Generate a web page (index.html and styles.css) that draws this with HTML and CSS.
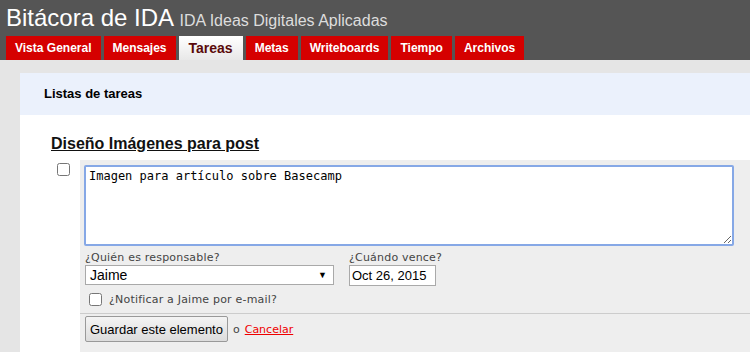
FILE: index.html
```html
<!DOCTYPE html>
<html lang="es">
<head>
<meta charset="UTF-8">
<title>Bitácora de IDA</title>
<link rel="stylesheet" href="styles.css">
</head>
<body>
<div id="header">
	<h1 class="title">Bitácora de IDA <span class="subtitle">IDA Ideas Digitales Aplicadas</span></h1>
	<ul class="tabs">
		<li><a href="#">Vista General</a></li>
		<li><a href="#">Mensajes</a></li>
		<li class="current"><a href="#">Tareas</a></li>
		<li><a href="#">Metas</a></li>
		<li><a href="#">Writeboards</a></li>
		<li><a href="#">Tiempo</a></li>
		<li><a href="#">Archivos</a></li>
	</ul>
</div>
<div id="content">
	<div class="panel-head">Listas de tareas</div>
	<h2 class="list-title">Diseño Imágenes para post</h2>
	<div class="item">
		<div class="check-col"><input type="checkbox"></div>
		<form class="item-form">
			<textarea class="item-text">Imagen para artículo sobre Basecamp</textarea>
			<div class="fields">
				<div class="field">
					<label>¿Quién es responsable?</label>
					<div class="select"><span>Jaime</span><span class="arrow">&#9660;</span></div>
				</div>
				<div class="field">
					<label>¿Cuándo vence?</label>
					<input class="date" type="text" value="Oct 26, 2015">
				</div>
			</div>
			<div class="notify"><input type="checkbox"> <span>¿Notificar a Jaime por e-mail?</span></div>
			<div class="actions">
				<button type="button" class="save">Guardar este elemento</button>
				<span class="or">o</span>
				<a href="#" class="cancel">Cancelar</a>
			</div>
		</form>
	</div>
</div>
</body>
</html>
```

FILE: styles.css
```css
body{
	margin: 0;
	background-color: #e5e5e5;
	font-family: "Liberation Sans", Arial, sans-serif;
	overflow: hidden;
}
#header{
	background-color: #555;
	padding: 4px 0 0 6px;
	height: 56px;
}
.title{
	margin: 0;
	height: 32px;
	font-size: 24px;
	font-weight: normal;
	color: #fff;
	line-height: 28px;
}
.subtitle{
	font-size: 16px;
	color: #ddd;
}
.tabs{
	list-style: none;
	margin: 0;
	padding: 0;
	display: flex;
	gap: 3px;
}
.tabs li a{
	display: block;
	height: 24px;
	line-height: 24px;
	padding: 0 9px;
	background-color: #d50000;
	color: #fff;
	font-size: 12px;
	font-weight: bold;
	text-decoration: none;
}
.tabs li.current a{
	background: linear-gradient(#fff, #e8e8e8);
	color: #5a0a0a;
	font-size: 14px;
	padding: 0 10px;
}
#content{
	margin: 13px 0 0 20px;
	background-color: #fff;
	height: 300px;
}
.panel-head{
	background-color: #ebf1fc;
	height: 42px;
	line-height: 42px;
	padding-left: 24px;
	font-size: 13px;
	font-weight: bold;
	color: #000;
}
.list-title{
	margin: 0;
	padding: 19px 0 0 31px;
	height: 26px;
	font-size: 16px;
	font-weight: bold;
	text-decoration: underline;
	color: #111;
	line-height: 20px;
}
.item{
	display: flex;
}
.check-col{
	width: 60px;
}
.check-col input{
	margin: 3px 0 0 37px;
	width: 13px;
	height: 13px;
}
.item-form{
	flex: 1;
	background-color: #eee;
	padding: 5px 0 0 4px;
	height: 200px;
}
.item-text{
	display: block;
	box-sizing: border-box;
	width: 650px;
	height: 81px;
	margin: 0;
	padding: 2px 3px;
	border: 2px solid #86a8e6;
	border-radius: 2px;
	font-family: "DejaVu Sans Mono", monospace;
	font-size: 12px;
	color: #000;
	resize: both;
	outline: none;
}
.fields{
	display: flex;
	gap: 15px;
	margin-top: 4px;
	padding-left: 1px;
}
.field label{
	display: block;
	font-family: "DejaVu Sans", Verdana, sans-serif;
	font-size: 11px;
	color: #444;
	letter-spacing: 0.2px;
	line-height: 15px;
}
.select{
	box-sizing: border-box;
	width: 249px;
	height: 20px;
	border: 1px solid #a9a9a9;
	background-color: #fff;
	display: flex;
	justify-content: space-between;
	align-items: center;
	padding: 0 6px 0 4px;
	font-size: 14px;
	color: #000;
}
.arrow{
	font-size: 9px;
}
.date{
	box-sizing: border-box;
	width: 87px;
	height: 21px;
	margin: 0;
	padding: 0 2px;
	border: 1px solid #a9a9a9;
	font-family: "Liberation Sans", Arial, sans-serif;
	font-size: 13px;
	color: #000;
}
.notify{
	display: flex;
	align-items: center;
	gap: 7px;
	height: 27px;
	border-bottom: 1px solid #ccc;
	margin-left: -4px;
	padding-left: 9px;
	font-family: "DejaVu Sans", Verdana, sans-serif;
	font-size: 11px;
	color: #444;
	letter-spacing: 0.2px;
}
.notify input{
	margin: 0;
	width: 13px;
	height: 13px;
}
.actions{
	display: flex;
	align-items: center;
	gap: 5px;
	padding: 2px 0 0 1px;
}
.save{
	height: 26px;
	padding: 0 4px;
	border: 1px solid #999;
	border-radius: 2px;
	background: linear-gradient(#f4f4f4, #dcdcdc);
	font-family: "Liberation Sans", Arial, sans-serif;
	font-size: 13px;
	color: #000;
}
.or{
	font-family: "DejaVu Sans", Verdana, sans-serif;
	font-size: 11px;
	color: #444;
}
.cancel{
	font-family: "DejaVu Sans", Verdana, sans-serif;
	font-size: 11px;
	color: #e00;
}
```
